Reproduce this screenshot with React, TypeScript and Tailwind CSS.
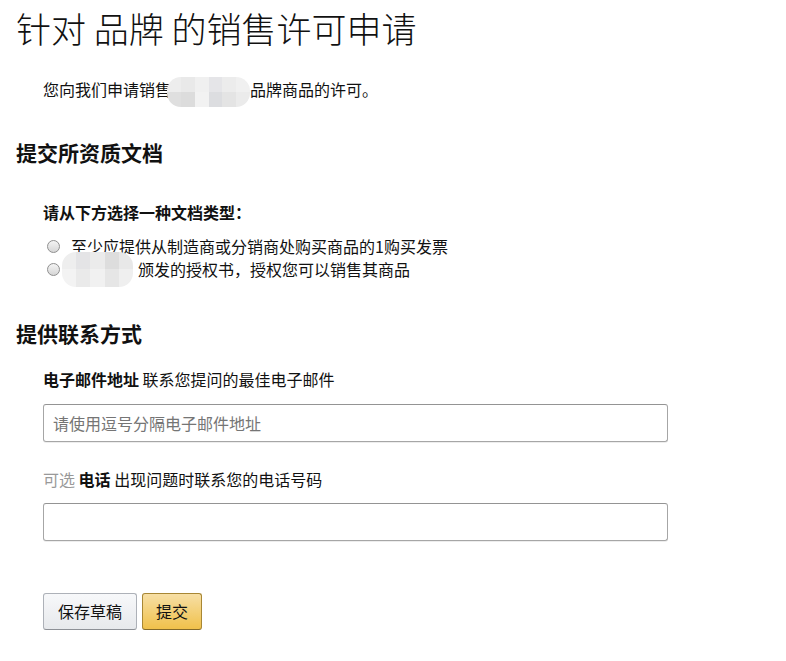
import React from 'react';

const font = { fontFamily: '"Noto Sans CJK SC", "Noto Sans", sans-serif' };

// pixelated placeholder that hides the brand name in the screenshot
const Mosaic: React.FC<{ rows: string[][]; className: string }> = ({ rows, className }) => (
  <span className={`inline-flex flex-col overflow-hidden rounded-[14px] align-middle ${className}`}>
    {rows.map((row, i) => (
      <span key={i} className="flex flex-1">
        {row.map((c, j) => (
          <span key={j} className="flex-1" style={{ backgroundColor: c }} />
        ))}
      </span>
    ))}
  </span>
);

const Radio: React.FC = () => (
  <span className="inline-block w-[13px] h-[13px] rounded-full border border-[#8f8f8f] bg-[linear-gradient(180deg,#f4f4f4_0%,#d6d6d6_100%)] shrink-0" />
);

const App: React.FC = () => {
  return (
    <div className="min-h-[661px] bg-white text-[#111]" style={font}>
      <div className="px-4 pt-[6px]">
        <h1 className="text-[35px] font-light leading-[44px] text-[#111]">针对 品牌 的销售许可申请</h1>

        <p className="mt-[27px] pl-[27px] text-[16px] leading-[24px]">
          您向我们申请销售
          <Mosaic
            className="w-[83px] h-[30px] -my-[4px] -ml-[4px]"
            rows={[
              ['#ededed', '#e9e9e9', '#f0f0f0', '#e5e5e8', '#ececec', '#f0f0f0'],
              ['#dfdfdf', '#dcdcdc', '#f2f2f2', '#dcdde0', '#e4e4e4', '#ebebeb'],
            ]}
          />
          品牌商品的许可。
        </p>

        <h2 className="mt-[35px] text-[21px] font-bold leading-[28px]">提交所资质文档</h2>

        <div className="pl-[27px]">
          <p className="mt-[34px] text-[16px] font-bold leading-[24px]">请从下方选择一种文档类型：</p>
          <div className="mt-[11px] pl-[4px] text-[16px] leading-[23px]">
            <label className="flex items-center gap-[11px]">
              <Radio />
              <span>至少应提供从制造商或分销商处购买商品的1购买发票</span>
            </label>
            <label className="relative flex items-center">
              <Radio />
              <Mosaic
                className="w-[71px] h-[35px] -my-[6px] ml-[2px] mr-[5px]"
                rows={[
                  ['#eeeeee', '#e4e4e6', '#ebebeb', '#dddddd', '#e8e8e8'],
                  ['#f3f3f3', '#eaeaea', '#f1f1f1', '#e6e6e6', '#efefef'],
                ]}
              />
              <span>颁发的授权书，授权您可以销售其商品</span>
            </label>
          </div>
        </div>

        <h2 className="mt-[38px] text-[21px] font-bold leading-[28px]">提供联系方式</h2>

        <div className="pl-[27px]">
          <p className="mt-[20px] text-[16px] leading-[24px]">
            <span className="font-bold">电子邮件地址</span> 联系您提问的最佳电子邮件
          </p>
          <input
            type="text"
            placeholder="请使用逗号分隔电子邮件地址"
            className="mt-[13px] block w-[625px] h-[38px] px-[9px] rounded-[3px] border border-[#a6a6a6] border-t-[#949494] shadow-[inset_0_1px_0_rgba(255,255,255,0.5),0_1px_0_rgba(0,0,0,0.07)] text-[16px] outline-none placeholder:text-[#757575]"
            style={font}
          />

          <p className="mt-[25px] text-[16px] leading-[24px]">
            <span className="text-[#999]">可选</span> <span className="font-bold">电话</span> 出现问题时联系您的电话号码
          </p>
          <input
            type="text"
            className="mt-[12px] block w-[625px] h-[38px] px-[9px] rounded-[3px] border border-[#a6a6a6] border-t-[#949494] shadow-[0_1px_0_rgba(0,0,0,0.07)] text-[16px] outline-none"
            style={font}
          />

          <div className="mt-[52px] flex gap-[5px]">
            <button className="h-[37px] px-[14px] rounded-[3px] border border-[#adb1b8] border-b-[#8d9096] bg-[linear-gradient(180deg,#f7f8fa,#e7e9ec)] text-[16px] text-[#111]">
              保存草稿
            </button>
            <button className="h-[37px] px-[13px] rounded-[3px] border border-[#a88734] border-b-[#846a29] bg-[linear-gradient(180deg,#f7dfa5,#f0c14b)] text-[16px] text-[#111]">
              提交
            </button>
          </div>
        </div>
      </div>
    </div>
  );
};

export default App;
